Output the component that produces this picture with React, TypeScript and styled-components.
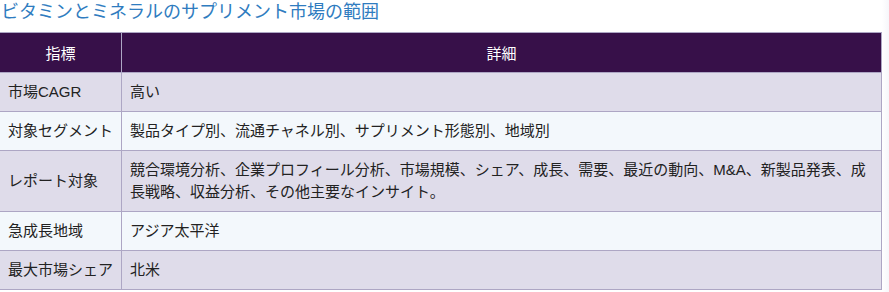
import React from "react";
import styled, { createGlobalStyle } from "styled-components";

const GlobalStyle = createGlobalStyle`
  html, body {
    margin: 0;
    padding: 0;
    background: #ffffff;
  }
  body {
    font-family: "Liberation Sans", "Noto Sans CJK JP", sans-serif;
  }
`;

const Page = styled.div`
  display: flex;
  width: 889px;
  height: 292px;
  overflow: hidden;
`;

const Content = styled.div`
  width: 882px;
  flex-shrink: 0;
`;

const Gutter = styled.div`
  flex: 1;
  background: linear-gradient(90deg, #ffffff 0%, #f6f6fa 100%);
`;

const Title = styled.h3`
  margin: 0;
  height: 32px;
  padding-left: 1px;
  font-size: 18px;
  font-weight: normal;
  line-height: 24px;
  color: #2f7cc0;
`;

const Table = styled.table`
  width: 882px;
  border-collapse: collapse;
  font-size: 15px;
  color: #222222;
`;

const HeadCell = styled.th`
  background: #371049;
  color: #ffffff;
  font-weight: normal;
  text-align: center;
  height: 39px;
  padding: 0 8px;
  border: 1px solid #ada6c4;
  border-left: none;
  &:last-child {
    border-right: 1px solid #ada6c4;
  }
`;

const Row = styled.tr<{ $shade: boolean }>`
  background: ${({ $shade }) => ($shade ? "#dfdcea" : "#f3f8fc")};
`;

const Cell = styled.td<{ $label?: boolean }>`
  padding: 8px 8px;
  line-height: 22px;
  vertical-align: middle;
  border: 1px solid #ada6c4;
  border-left: ${({ $label }) => ($label ? "none" : "1px solid #ada6c4")};
  width: ${({ $label }) => ($label ? "105px" : "auto")};
  white-space: ${({ $label }) => ($label ? "nowrap" : "normal")};
`;

const rows = [
  ["市場CAGR", "高い"],
  ["対象セグメント", "製品タイプ別、流通チャネル別、サプリメント形態別、地域別"],
  [
    "レポート対象",
    "競合環境分析、企業プロフィール分析、市場規模、シェア、成長、需要、最近の動向、M&A、新製品発表、成長戦略、収益分析、その他主要なインサイト。",
  ],
  ["急成長地域", "アジア太平洋"],
  ["最大市場シェア", "北米"],
];

export default function App() {
  return (
    <>
      <GlobalStyle />
      <Page>
        <Content>
          <Title>ビタミンとミネラルのサプリメント市場の範囲</Title>
          <Table>
            <thead>
              <tr>
                <HeadCell>指標</HeadCell>
                <HeadCell>詳細</HeadCell>
              </tr>
            </thead>
            <tbody>
              {rows.map(([label, value], i) => (
                <Row key={label} $shade={i % 2 === 0}>
                  <Cell $label>{label}</Cell>
                  <Cell>{value}</Cell>
                </Row>
              ))}
            </tbody>
          </Table>
        </Content>
        <Gutter />
      </Page>
    </>
  );
}
